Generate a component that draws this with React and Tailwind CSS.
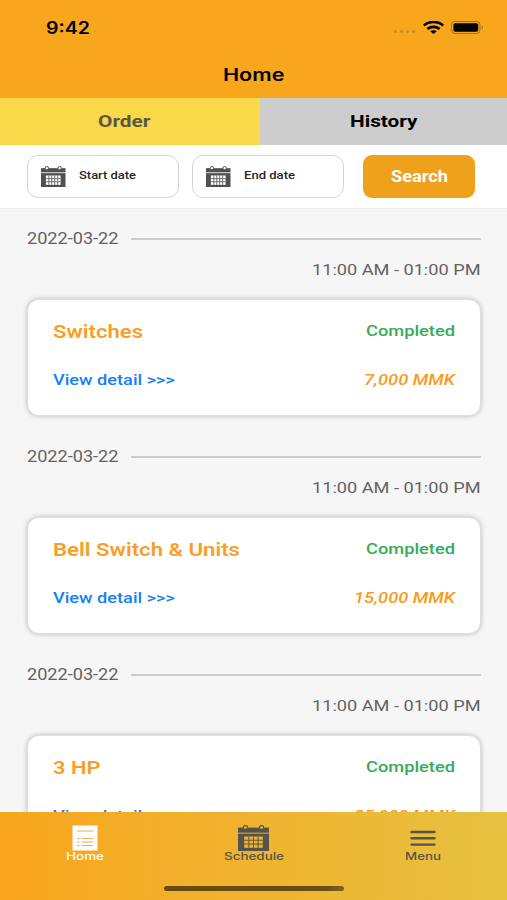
import React, { useLayoutEffect, useRef, useState } from 'react';

const ORDERS = [
    { id: 1, date: '2022-03-22', time: '11:00 AM - 01:00 PM', title: 'Switches', titleWidth: 90, price: '7,000 MMK', priceWidth: 91 },
    { id: 2, date: '2022-03-22', time: '11:00 AM - 01:00 PM', title: 'Bell Switch & Units', titleWidth: 187, price: '15,000 MMK', priceWidth: 101 },
    { id: 3, date: '2022-03-22', time: '11:00 AM - 01:00 PM', title: '3 HP', titleWidth: 47.5, price: '25,000 MMK', priceWidth: 101 },
];

// Stretches a label horizontally so it fills the given width
function WideText({ width, className = '', children }) {
    const ref = useRef(null);
    const [scale, setScale] = useState(1);

    useLayoutEffect(() => {
        const natural = parseFloat(getComputedStyle(ref.current).width);
        if (natural) setScale(width / natural);
    }, [width, children]);

    return (
        <span className={`block whitespace-nowrap text-left ${className}`} style={{ width }}>
            <span ref={ref} className="inline-block origin-left" style={{ transform: `scaleX(${scale})` }}>{children}</span>
        </span>
    );
}

function CalendarIcon({ className, grid = 'M8.75 9.7v9.6M12.5 9.7v9.6M16.25 9.7v9.6' }) {
    return (
        <svg viewBox="0 0 25 22" preserveAspectRatio="none" className={className} fill="none">
            <path d="M0 2.2h25v4.3H0z" fill="currentColor" />
            <path d="M0 7.3h25V22H0z" fill="currentColor" />
            <circle cx="6" cy="2.2" r="1.7" fill="var(--cell)" stroke="currentColor" strokeWidth="1" />
            <circle cx="19" cy="2.2" r="1.7" fill="var(--cell)" stroke="currentColor" strokeWidth="1" />
            <path d="M5 9.7h15v9.6H5z" fill="var(--cell)" />
            <path d={grid} stroke="currentColor" strokeWidth="0.8" />
            <path d="M5 12.9h15M5 16.1h15" stroke="currentColor" strokeWidth="0.8" />
        </svg>
    );
}

function StatusBar() {
    return (
        <div className="flex h-[54px] items-center justify-between pl-[46px] pr-[23px]">
            <WideText width={44} className="mt-[2px] font-[Inter] text-[17px] font-semibold leading-5">9:42</WideText>
            <div className="flex items-center">
                <div className="mt-[9px] flex gap-[3px] pr-[8px]">
                    {[0, 1, 2, 3].map((dot) => (
                        <i key={dot} className="size-[3px] rounded-full bg-[#c58924]" />
                    ))}
                </div>
                <svg viewBox="0 0 21 13" className="h-[13px] w-[21px]" fill="none" stroke="currentColor" strokeWidth="2.6">
                    <path d="M.8 4.5C6.1-.2 14.9-.2 20.2 4.5" />
                    <path d="M4.4 8c3.5-2.9 8.7-2.9 12.2 0" />
                    <path d="M7.2 10.3c1.9-1.4 4.7-1.4 6.6 0L10.5 13z" fill="currentColor" stroke="none" />
                </svg>
                <svg viewBox="0 0 33 13" className="ml-[7px] h-[13px] w-[33px]">
                    <rect x="0.5" y="0.5" width="28.5" height="12" rx="3.5" fill="none" stroke="#a36e16" />
                    <rect x="2.4" y="2.2" width="24.8" height="8.6" rx="1.8" />
                    <path d="M30.7 4.5c1.6.5 1.6 3.5 0 4z" fill="#a36e16" />
                </svg>
            </div>
        </div>
    );
}

function DateField({ label, width }) {
    return (
        <div className="flex h-[43px] w-[152px] items-center rounded-[11px] border border-[#d3d6d7] bg-white pl-[13px] [--cell:#fff]">
            <CalendarIcon className="h-[21.5px] w-[24.5px] text-[#505050]" grid="M8 9.7v9.6M11 9.7v9.6M14 9.7v9.6M17 9.7v9.6" />
            <WideText width={width} className="ml-[13px] mt-[-3px] text-[11.5px] font-medium leading-4 text-[#262626]">{label}</WideText>
        </div>
    );
}

function OrderCard({ order }) {
    return (
        <section className="h-[218px] shrink-0">
            <div className="flex items-center gap-[13px] pt-[19px]">
                <WideText width={91.5} className="text-[15.8px] leading-[22px] text-[#626262]">{order.date}</WideText>
                <hr className="mt-px h-[2px] flex-1 border-0 bg-[#cdcdcd]" />
            </div>
            <div className="mt-[9px] flex justify-end">
                <WideText width={168.5} className="text-[15.5px] leading-[22px] text-[#626262]">{order.time}</WideText>
            </div>
            <article className="mt-[18.5px] h-[117px] rounded-[12px] border border-[#dedede] bg-white pl-[25px] pr-[24.5px] pt-5 shadow-[0_0_5px_rgba(0,0,0,0.25)]">
                <div className="flex justify-between">
                    <WideText width={order.titleWidth} className="text-[18.5px] font-semibold leading-6 text-[#f99f29]">{order.title}</WideText>
                    <WideText width={89} className="text-[15.5px] font-medium leading-[22px] text-[#37ab5b]">Completed</WideText>
                </div>
                <div className="mt-[25px] flex justify-between">
                    <WideText width={122} className="text-[15.5px] font-medium leading-[22px] text-[#1480f5]">{'View detail >>>'}</WideText>
                    <WideText width={order.priceWidth} className="text-[15.5px] font-medium italic leading-[22px] text-[#f99a1c]">{order.price}</WideText>
                </div>
            </article>
        </section>
    );
}

function TabItem({ icon, label, width, className = '' }) {
    return (
        <div className={`flex flex-1 flex-col items-center ${className}`}>
            {icon}
            <WideText width={width} className="font-[Inter] text-[10.5px] font-medium leading-3">{label}</WideText>
        </div>
    );
}

export default function App() {
    return (
        <div className="flex h-[900px] w-[507px] flex-col overflow-hidden bg-[#f6f6f6] font-[Roboto,sans-serif] text-black">
            {/* Header */}
            <header className="h-[98px] shrink-0 bg-[#f8a61c]">
                <StatusBar />
                <div className="flex justify-center pt-[11px]">
                    <WideText width={61.5} className="font-[Inter] text-[17px] font-semibold leading-5">Home</WideText>
                </div>
            </header>

            {/* Order / History */}
            <div className="flex h-[46.5px] shrink-0 text-[17px] font-bold leading-[46px]">
                <div className="flex w-[260px] justify-center bg-[#f9d849] pr-[11px] text-[#5b5744]">
                    <WideText width={52.5}>Order</WideText>
                </div>
                <div className="flex flex-1 justify-center bg-[#cdcdcd]">
                    <WideText width={67.5}>History</WideText>
                </div>
            </div>

            {/* Date filter */}
            <div className="flex h-[64px] shrink-0 gap-[13px] border-b border-[#ededed] bg-white pl-[27px] pt-[10.5px]">
                <DateField label="Start date" width={57} />
                <DateField label="End date" width={51} />
                <button className="ml-[6px] flex h-[43px] w-[112px] items-center justify-center rounded-[9px] bg-[#efa11c] text-white">
                    <WideText width={57} className="text-[16px] font-bold leading-5">Search</WideText>
                </button>
            </div>

            {/* Order list */}
            <main className="flex min-h-0 flex-1 flex-col overflow-hidden px-[26.5px]">
                {ORDERS.map((order) => <OrderCard key={order.id} order={order} />)}
            </main>

            {/* Bottom navigation */}
            <nav className="flex h-[88.5px] shrink-0 flex-col bg-linear-to-r from-[#f8a51b] to-[#e6c13f]">
                <div className="flex pt-[13px] text-[#55534a] [--cell:#eeb42c]">
                    <TabItem
                        label="Home" width={38} className="text-[#fffdf6]"
                        icon={
                            <svg viewBox="0 0 26 26" className="h-[26px] w-[26px]" fill="none">
                                <path d="M.5.5h25v25H.5z" fill="#fff" />
                                <path d="M5 6h16M9.5 13.5H21M9.5 17H21M9.5 20.5H21M5 13.5h2.5M5 17h2.5M5 20.5h2.5" stroke="#e9ad4b" strokeWidth="1.1" />
                            </svg>
                        }
                    />
                    <TabItem label="Schedule" width={60} icon={<CalendarIcon className="h-[26px] w-[31px]" />} />
                    <TabItem
                        label="Menu" width={36}
                        icon={
                            <svg viewBox="0 0 26 26" className="h-[26px] w-[26px]" stroke="currentColor" strokeWidth="2.4" strokeLinecap="round">
                                <path d="M1.5 7h23M1.5 13.3h23M1.5 19.6h23" />
                            </svg>
                        }
                    />
                </div>
                <div className="mx-auto mt-auto mb-[9px] h-[5px] w-[180px] rounded-full bg-linear-to-r from-[#68480f] via-[#6a4d13] via-90% to-[#806325]" />
            </nav>
        </div>
    );
}
